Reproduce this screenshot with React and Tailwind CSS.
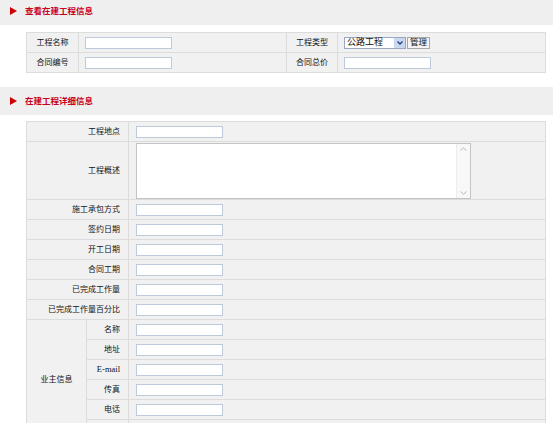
import React from "react";

const Tri = () => (
  <svg width="7" height="8" viewBox="0 0 7 8" className="block">
    <polygon points="0,0 7,4 0,8" fill="#cc0000" />
  </svg>
);

function Header({ title, className }) {
  return (
    <div className={`flex items-center bg-[#efefef] pl-[10px] ${className}`}>
      <Tri />
      <span className="ml-[8px] text-[8.5px] font-bold leading-none text-[#c8001e]">{title}</span>
    </div>
  );
}

const Input = () => (
  <input className="block h-[12px] w-[87px] border border-[#bccadb] bg-white outline-none" />
);

const td = "border border-[#dcdcdc] bg-[#f1f1f1] p-0 align-middle";

export default function App() {
  const simple = ["施工承包方式", "签约日期", "开工日期", "合同工期", "已完成工作量", "已完成工作量百分比"];
  const owner = ["名称", "地址", "E-mail", "传真", "电话", ""];
  return (
    <div className="h-[423px] w-[553px] overflow-hidden bg-white font-['Liberation_Serif','Noto_Sans_CJK_SC',serif] text-[8px] text-[#111]">
      <Header title="查看在建工程信息" className="h-[25px] pb-[3px]" />
      <div className="pl-[26px] pt-[7px]">
        <table className="w-[519px] table-fixed border-collapse">
          <colgroup>
            <col className="w-[52px]" />
            <col className="w-[208px]" />
            <col className="w-[51px]" />
            <col className="w-[208px]" />
          </colgroup>
          <tbody>
            <tr className="h-[20px]">
              <td className={`${td} text-center`}>工程名称</td>
              <td className={`${td} pl-[6px]`}><Input /></td>
              <td className={`${td} text-center`}>工程类型</td>
              <td className={`${td} pl-[6px]`}>
                <div className="flex items-center">
                  <div className="flex h-[12px] w-[62px] items-center border border-[#9aa9bd] bg-white">
                    <span className="flex-1 pl-[2px] text-[9px] leading-none">公路工程</span>
                    <span className="flex h-[10px] w-[11px] items-center justify-center bg-[#c9d7ef]">
                      <svg width="6" height="4" viewBox="0 0 6 4"><path d="M0.5 0.5 L3 3 L5.5 0.5" stroke="#2a3f8f" strokeWidth="1.4" fill="none" /></svg>
                    </span>
                  </div>
                  <button className="ml-[1px] h-[12px] border border-[#a8a8a8] bg-[#f4f4f4] px-[2px] text-[8.5px] leading-none">管理</button>
                </div>
              </td>
            </tr>
            <tr className="h-[20px]">
              <td className={`${td} text-center`}>合同编号</td>
              <td className={`${td} pl-[6px]`}><Input /></td>
              <td className={`${td} text-center`}>合同总价</td>
              <td className={`${td} pl-[6px]`}><Input /></td>
            </tr>
          </tbody>
        </table>
      </div>
      <Header title="在建工程详细信息" className="mt-[14px] h-[28px]" />
      <div className="pl-[26px] pt-[6px]">
        <table className="w-[519px] table-fixed border-collapse">
          <colgroup>
            <col className="w-[60px]" />
            <col className="w-[42px]" />
            <col className="w-[417px]" />
          </colgroup>
          <tbody>
            <tr className="h-[20px]">
              <td colSpan={2} className={`${td} pr-[8px] text-right`}>工程地点</td>
              <td className={`${td} pl-[7px]`}><Input /></td>
            </tr>
            <tr className="h-[58px]">
              <td colSpan={2} className={`${td} pr-[8px] text-right`}>工程概述</td>
              <td className={`${td} pl-[7px]`}>
                <div className="flex h-[56px] w-[335px] border border-[#c4c4c4] bg-white">
                  <textarea className="h-full flex-1 resize-none overflow-hidden border-0 outline-none" />
                  <div className="flex w-[14px] flex-col items-center justify-between border-l border-[#ececec] bg-[#f8f8f6] py-[3px]">
                    <svg width="7" height="4" viewBox="0 0 7 4"><path d="M0.5 3.5 L3.5 0.8 L6.5 3.5" stroke="#b8b8b8" strokeWidth="1" fill="none" /></svg>
                    <svg width="7" height="4" viewBox="0 0 7 4"><path d="M0.5 0.5 L3.5 3.2 L6.5 0.5" stroke="#b8b8b8" strokeWidth="1" fill="none" /></svg>
                  </div>
                </div>
              </td>
            </tr>
            {simple.map((l) => (
              <tr key={l} className="h-[20px]">
                <td colSpan={2} className={`${td} pr-[8px] text-right`}>{l}</td>
                <td className={`${td} pl-[7px]`}><Input /></td>
              </tr>
            ))}
            {owner.map((l, i) => (
              <tr key={i} className="h-[20px]">
                {i === 0 && (
                  <td rowSpan={owner.length} className={`${td} text-center`}>业主信息</td>
                )}
                <td className={`${td} pr-[8px] text-right ${l === "E-mail" ? "text-[8.5px]" : ""}`}>{l}</td>
                <td className={`${td} pl-[7px]`}><Input /></td>
              </tr>
            ))}
          </tbody>
        </table>
      </div>
    </div>
  );
}
